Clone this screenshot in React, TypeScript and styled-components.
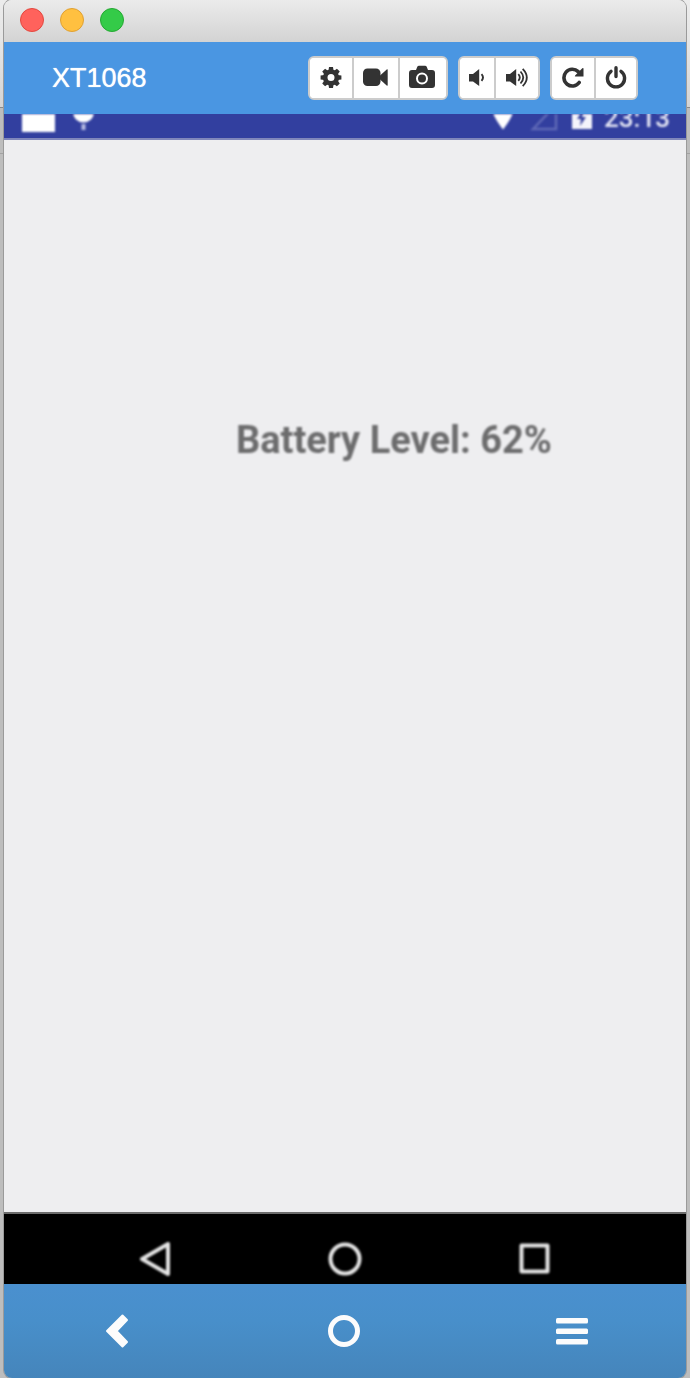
import React from 'react';
import styled, { createGlobalStyle } from 'styled-components';

const Global = createGlobalStyle`
  * { box-sizing: border-box; }
  html, body { margin: 0; padding: 0; }
  body { font-family: "Liberation Sans", Arial, sans-serif; background: #bdbdbd; }
`;

const Desktop = styled.div`
  display: flex;
  min-height: 100vh;
  padding: 0 4px;
  background:
    linear-gradient(#8a8a8a, #8a8a8a) 0 107px / 100% 1px no-repeat,
    linear-gradient(#a2a2a2, #a2a2a2) 0 153px / 100% 1px no-repeat,
    linear-gradient(#ececec 0, #e4e4e4 48px, #d4d4d4 107px, #bdbdbd 108px, #bdbdbd 100%);
`;

const Window = styled.main`
  flex: 1;
  display: flex;
  flex-direction: column;
  min-width: 0;
  overflow: hidden;
  border-radius: 8px;
  box-shadow: 0 0 0 1px #9a9a9a;
`;

const TitleBar = styled.header`
  display: flex;
  align-items: center;
  gap: 16px;
  height: 42px;
  padding: 0 16px 2px;
  background: linear-gradient(#ebebeb, #d3d3d3);
`;

const Light = styled.button<{ $fill: string; $edge: string }>`
  width: 24px;
  height: 24px;
  padding: 0;
  border: 1px solid ${p => p.$edge};
  border-radius: 50%;
  background: ${p => p.$fill};
`;

const Toolbar = styled.div`
  display: flex;
  align-items: center;
  justify-content: space-between;
  height: 72px;
  padding: 0 48px;
  background: #4a96e2;
`;

const DeviceName = styled.h1`
  margin: 0;
  font-size: 27px;
  font-weight: 400;
  line-height: 32px;
  color: #fff;
  text-shadow: 0 0 1px #fff;
`;

const Groups = styled.div`
  display: flex;
  gap: 10px;
`;

const Group = styled.div`
  display: flex;
  height: 44px;
  border: 2px solid #ccc;
  border-radius: 6px;
  overflow: hidden;
  background: #fff;
`;

const ToolButton = styled.button<{ $width: number }>`
  display: flex;
  align-items: center;
  justify-content: center;
  width: ${p => p.$width}px;
  padding: 0;
  border: 0;
  background: #fff;
  color: #333;
  & + & { border-left: 2px solid #ccc; }
`;

const Screen = styled.section`
  flex: 1;
  display: flex;
  flex-direction: column;
  overflow: hidden;
  background: #eeeef0;
`;

const StatusBar = styled.div`
  display: flex;
  justify-content: space-between;
  height: 26px;
  padding: 0 16px;
  overflow: hidden;
  background: #323f9f;
  border-bottom: 2px solid #8087bb;
`;

const StatusSide = styled.div`
  display: flex;
  align-items: flex-start;
  filter: blur(1px);
`;

const Clock = styled.time`
  margin: -12px 0 0 12px;
  font: 500 26px/32px Roboto, sans-serif;
  color: #e4e6f4;
`;

const Content = styled.div`
  flex: 1;
  padding: 276px 16px 0 114px;
  text-align: center;
`;

const Level = styled.p`
  margin: 0;
  font: 700 38px/48px Roboto, sans-serif;
  color: #6c6c6d;
  filter: blur(1px);
`;

const AndroidNav = styled.nav`
  display: flex;
  justify-content: center;
  gap: 142px;
  height: 72px;
  padding-top: 21px;
  background: #000;
  border-top: 2px solid #6c6c6c;
`;

const AndroidButton = styled.button`
  display: flex;
  align-items: center;
  justify-content: center;
  width: 48px;
  height: 48px;
  padding: 0;
  border: 0;
  background: none;
  filter: blur(1px);
`;

const BottomBar = styled.nav`
  display: flex;
  height: 94px;
  background: linear-gradient(#4a90cf 0, #488fca 40%, #4585bb 100%);
`;

const BottomButton = styled.button`
  flex: 1;
  display: flex;
  align-items: center;
  justify-content: center;
  padding: 0 1px 1px 0;
  border: 0;
  background: none;
`;

const teeth = [0, 45, 90, 135, 180, 225, 270, 315];

export default function App() {
  return (
    <>
      <Global />
      <Desktop>
        <Window>
          <TitleBar>
            <Light $fill="#ff625c" $edge="#e2483f" aria-label="Close" />
            <Light $fill="#ffc040" $edge="#dfa032" aria-label="Minimize" />
            <Light $fill="#34cb48" $edge="#25a832" aria-label="Zoom" />
          </TitleBar>
          <Toolbar>
            <DeviceName>XT1068</DeviceName>
            <Groups>
              <Group>
                <ToolButton $width={42} aria-label="Settings">
                  <svg width="22" height="22" viewBox="-11 -10.500 22 22">
                    {teeth.map(a => (
                      <path key={a} transform={`rotate(${a})`} d="M-2.600-6.500-2-10.400h4l.6 3.900z" fill="currentColor" />
                    ))}
                    <circle r="5.800" fill="none" stroke="currentColor" strokeWidth="4.600" />
                  </svg>
                </ToolButton>
                <ToolButton $width={46} aria-label="Record video">
                  <svg width="26" height="20" viewBox="0.500 0.500 26 20" fill="currentColor">
                    <rect x="0.500" y="1" width="17.500" height="17.500" rx="4.500" />
                    <path d="M17 8.500 24.200 2q1-.7 1 .5v15q0 1.200-1 .5L17 11.500z" />
                  </svg>
                </ToolButton>
                <ToolButton $width={48} aria-label="Screenshot">
                  <svg width="28" height="26" viewBox="0 0 28 26">
                    <path d="M3 5h4l1.300-3.200Q8.700.700 10 .700h6q1.300 0 1.700 1.100L19 5h4q3 0 3 3v12q0 3-3 3H3q-3 0-3-3V8q0-3 3-3z" fill="currentColor" />
                    <circle cx="13" cy="13.500" r="5" fill="currentColor" stroke="#fff" strokeWidth="2" />
                  </svg>
                </ToolButton>
              </Group>
              <Group>
                <ToolButton $width={34} aria-label="Volume down">
                  <svg width="18" height="18" viewBox="0 0 18 18">
                    <path d="M1 5h4L11.200 0v17L5 12.500H1z" fill="currentColor" />
                    <path d="M13.500 5.200q3 3.300 0 6.600" fill="none" stroke="currentColor" strokeWidth="1.900" />
                  </svg>
                </ToolButton>
                <ToolButton $width={44} aria-label="Volume up">
                  <svg width="24" height="20" viewBox="0 0 24 20">
                    <path d="M1 6h4L11.200 1v17L5 13.500H1z" fill="currentColor" />
                    <path d="M13.300 6.200q3 3.300 0 6.600M15.500 3.500q5.500 6 0 12M17.700.800q8.200 8.700 0 17.400" fill="none" stroke="currentColor" strokeWidth="1.800" />
                  </svg>
                </ToolButton>
              </Group>
              <Group>
                <ToolButton $width={42} aria-label="Rotate">
                  <svg width="22" height="22" viewBox="0 0 22 22">
                    <path d="M17.200 15.500A8.400 8.400 0 1 1 16.200 4.600" fill="none" stroke="currentColor" strokeWidth="3.600" strokeLinecap="round" />
                    <path d="M20.300 1.200q1.200-.7 1.200.6v7.700h-8q-1.300 0-.4-1.100z" fill="currentColor" />
                  </svg>
                </ToolButton>
                <ToolButton $width={42} aria-label="Power">
                  <svg width="22" height="24" viewBox="0 0 22 24" fill="none" stroke="currentColor" strokeWidth="3.400" strokeLinecap="round">
                    <path d="M6 5.300a8.600 8.600 0 1 0 10 0M11 1.700v8.800" />
                  </svg>
                </ToolButton>
              </Group>
            </Groups>
          </Toolbar>
          <Screen>
            <StatusBar>
              <StatusSide>
                <svg width="90" height="20" viewBox="0 0 90 20">
                  <path d="M2-4h33v22H2z" fill="#fff" />
                  <circle cx="63.500" cy="-2" r="10.500" fill="#fff" />
                  <path d="M61.500 10h4v6h-4z" fill="#b9bde2" />
                </svg>
              </StatusSide>
              <StatusSide>
                <svg width="104" height="20" viewBox="0 0 104 20">
                  <path d="M4-4h22q-2 8-11 19.500Q6 4 4-4z" fill="#fff" />
                  <path d="M45 15 68-9v24z" fill="none" stroke="#5f69b6" strokeWidth="2.500" />
                  <path d="M84-4h20v19H84z" fill="#f4f4fb" />
                  <path d="m95-4-6 9h4l-1 7 6-9h-4l2-7z" fill="#323f9f" />
                </svg>
                <Clock>23:13</Clock>
              </StatusSide>
            </StatusBar>
            <Content>
              <Level>Battery Level: 62%</Level>
            </Content>
            <AndroidNav>
              <AndroidButton aria-label="Device back">
                <svg width="36" height="38" viewBox="0 0 36 38" fill="none" stroke="#e4e4e4" strokeWidth="4" strokeLinejoin="round">
                  <path d="M5 19 31 4v30z" />
                </svg>
              </AndroidButton>
              <AndroidButton aria-label="Device home">
                <svg width="36" height="36" viewBox="0 0 36 36" fill="none" stroke="#e4e4e4" strokeWidth="4">
                  <circle cx="18" cy="18" r="14.500" />
                </svg>
              </AndroidButton>
              <AndroidButton aria-label="Device recents">
                <svg width="36" height="36" viewBox="0 0 36 36" fill="none" stroke="#e4e4e4" strokeWidth="4" strokeLinejoin="round">
                  <path d="M4.500 4.500h26v26h-26z" />
                </svg>
              </AndroidButton>
            </AndroidNav>
          </Screen>
          <BottomBar>
            <BottomButton aria-label="Back">
              <svg width="24" height="36" viewBox="0 0 24 36" fill="#fcfcfc">
                <path d="M2 18 17.500 2.500l4.500 4.500L11.500 18 22 29l-4.500 4.500z" stroke="#fcfcfc" strokeWidth="2" strokeLinejoin="round" />
              </svg>
            </BottomButton>
            <BottomButton aria-label="Home">
              <svg width="34" height="34" viewBox="0 0 34 34" fill="none" stroke="#fcfcfc" strokeWidth="5">
                <circle cx="17" cy="17" r="13.500" />
              </svg>
            </BottomButton>
            <BottomButton aria-label="Menu">
              <svg width="32" height="28" viewBox="0 0 32 28" fill="#fcfcfc">
                <rect y="1" width="32" height="5.500" rx="1.500" />
                <rect y="11.500" width="32" height="5.500" rx="1.500" />
                <rect y="22" width="32" height="5.500" rx="1.500" />
              </svg>
            </BottomButton>
          </BottomBar>
        </Window>
      </Desktop>
    </>
  );
}
